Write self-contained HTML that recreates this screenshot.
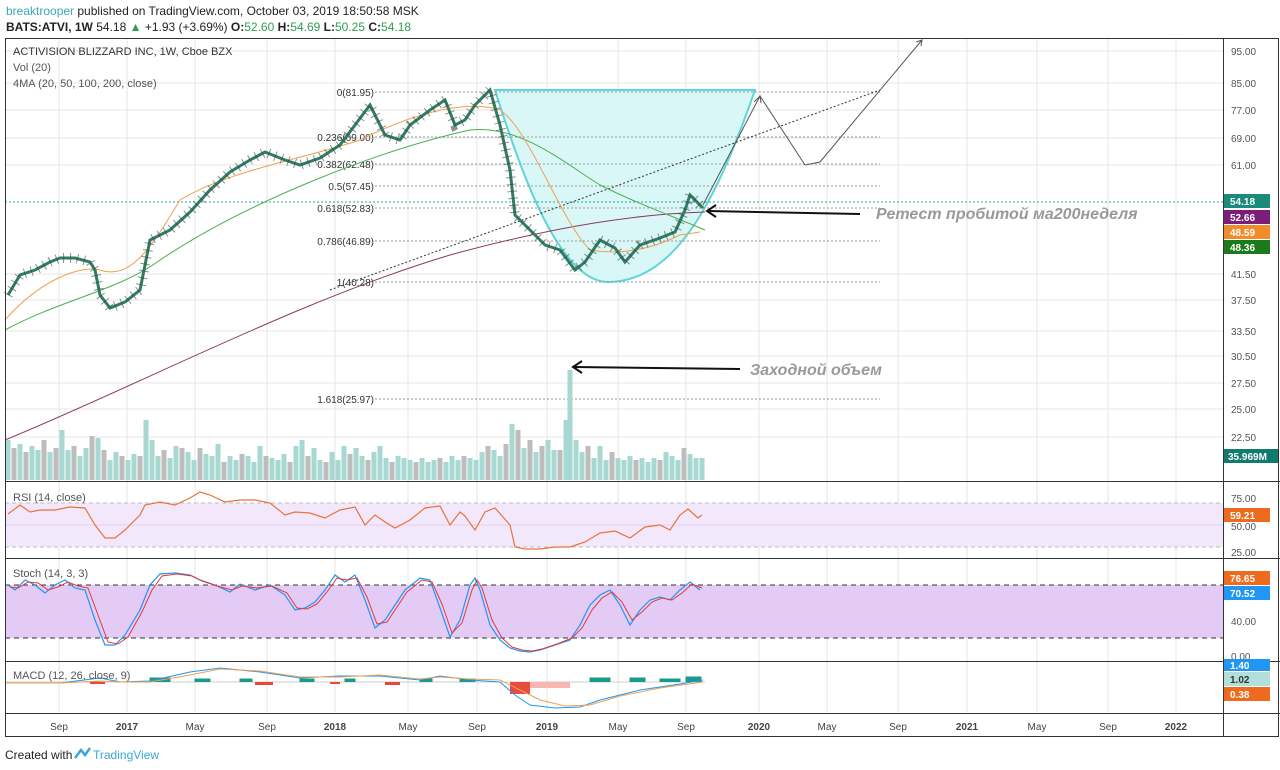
<!DOCTYPE html>
<html><head><meta charset="utf-8"><style>
html,body{margin:0;padding:0;background:#fff;width:1280px;height:770px;overflow:hidden;font-family:"Liberation Sans",sans-serif;}
svg text{font-family:"Liberation Sans",sans-serif;}
</style></head><body>
<svg width="1280" height="770" viewBox="0 0 1280 770" xmlns="http://www.w3.org/2000/svg">
<rect width="1280" height="770" fill="#fff"/>
<text x="6" y="15" font-size="12"><tspan fill="#3aa6b9">breaktrooper</tspan><tspan fill="#222"> published on TradingView.com, October 03, 2019 18:50:58 MSK</tspan></text>
<text x="6" y="31" font-size="12" fill="#222"><tspan font-weight="bold">BATS:ATVI, 1W</tspan> 54.18 <tspan fill="#2e9e4f">▲</tspan> +1.93 (+3.69%) <tspan font-weight="bold">O:</tspan><tspan fill="#2e9e4f">52.60</tspan> <tspan font-weight="bold">H:</tspan><tspan fill="#2e9e4f">54.69</tspan> <tspan font-weight="bold">L:</tspan><tspan fill="#2e9e4f">50.25</tspan> <tspan font-weight="bold">C:</tspan><tspan fill="#2e9e4f">54.18</tspan></text>
<g stroke="#e6e6e6" stroke-width="1">
<line x1="59" y1="38" x2="59" y2="712"/><line x1="127" y1="38" x2="127" y2="712"/><line x1="195" y1="38" x2="195" y2="712"/><line x1="267" y1="38" x2="267" y2="712"/><line x1="335" y1="38" x2="335" y2="712"/><line x1="408" y1="38" x2="408" y2="712"/><line x1="477" y1="38" x2="477" y2="712"/><line x1="547" y1="38" x2="547" y2="712"/><line x1="618" y1="38" x2="618" y2="712"/><line x1="686" y1="38" x2="686" y2="712"/><line x1="759" y1="38" x2="759" y2="712"/><line x1="827" y1="38" x2="827" y2="712"/><line x1="898" y1="38" x2="898" y2="712"/><line x1="967" y1="38" x2="967" y2="712"/><line x1="1037" y1="38" x2="1037" y2="712"/><line x1="1108" y1="38" x2="1108" y2="712"/><line x1="1176" y1="38" x2="1176" y2="712"/>
<line x1="5" y1="51" x2="1223" y2="51"/><line x1="5" y1="83" x2="1223" y2="83"/><line x1="5" y1="110" x2="1223" y2="110"/><line x1="5" y1="138" x2="1223" y2="138"/><line x1="5" y1="165" x2="1223" y2="165"/><line x1="5" y1="274" x2="1223" y2="274"/><line x1="5" y1="300" x2="1223" y2="300"/><line x1="5" y1="331" x2="1223" y2="331"/><line x1="5" y1="356" x2="1223" y2="356"/><line x1="5" y1="383" x2="1223" y2="383"/><line x1="5" y1="409" x2="1223" y2="409"/><line x1="5" y1="437" x2="1223" y2="437"/>
</g>
<path d="M495,90 C520,170 560,285 610,282 C680,280 720,190 755,90 Z" fill="#d9f7f7" stroke="#5fd6d6" stroke-width="2"/>
<g stroke="#999" stroke-width="1" stroke-dasharray="2,2">
<line x1="375" y1="92" x2="880" y2="92"/><line x1="375" y1="137" x2="880" y2="137"/><line x1="375" y1="164" x2="880" y2="164"/><line x1="375" y1="186" x2="880" y2="186"/><line x1="375" y1="208" x2="880" y2="208"/><line x1="375" y1="241" x2="880" y2="241"/><line x1="375" y1="282" x2="880" y2="282"/><line x1="375" y1="399" x2="880" y2="399"/>
</g>
<g font-size="10" fill="#333" text-anchor="end">
<text x="374" y="96">0(81.95)</text><text x="374" y="141">0.236(69.00)</text><text x="374" y="168">0.382(62.48)</text><text x="374" y="190">0.5(57.45)</text><text x="374" y="212">0.618(52.83)</text><text x="374" y="245">0.786(46.89)</text><text x="374" y="286">1(40.28)</text><text x="374" y="403">1.618(25.97)</text>
</g>
<line x1="5" y1="202" x2="1223" y2="202" stroke="#26a69a" stroke-dasharray="2,2"/>
<line x1="330" y1="290" x2="880" y2="90" stroke="#333" stroke-dasharray="2,2"/>
<path d="M8,480V440M14,480V448M20,480V444M26,480V452M32,480V446M38,480V450M44,480V440M50,480V452M56,480V448M62,480V430M68,480V450M74,480V446M80,480V456M86,480V448M92,480V436M98,480V438M104,480V450M110,480V460M116,480V452M122,480V456M128,480V460M134,480V454M140,480V456M146,480V420M152,480V440M158,480V456M164,480V450M170,480V458M176,480V446M182,480V448M188,480V452M194,480V460M200,480V448M206,480V454M212,480V456M218,480V444M224,480V462M230,480V456M236,480V460M242,480V454M248,480V456M254,480V462M260,480V446M266,480V456M272,480V458M278,480V460M284,480V454M290,480V462M296,480V446M302,480V440M308,480V456M314,480V448M320,480V460M326,480V462M332,480V452M338,480V460M344,480V446M350,480V454M356,480V448M362,480V456M368,480V460M374,480V452M380,480V446M386,480V458M392,480V462M398,480V456M404,480V458M410,480V460M416,480V462M422,480V458M428,480V462M434,480V460M440,480V458M446,480V462M452,480V456M458,480V460M464,480V456M470,480V458M476,480V460M482,480V452M488,480V446M494,480V450M500,480V456M506,480V444M512,480V424M518,480V430M524,480V448M530,480V440M536,480V452M542,480V446M548,480V440M554,480V450M560,480V450M566,480V420M570,480V370M576,480V440M582,480V452M588,480V446M594,480V458M600,480V446M606,480V460M612,480V452M618,480V458M624,480V460M630,480V456M636,480V460M642,480V458M648,480V462M654,480V458M660,480V460M666,480V452M672,480V456M678,480V460M684,480V448M690,480V454M696,480V458M702,480V458" stroke="#a8d8d2" stroke-width="5"/>
<path d="M14,480V448M26,480V452M44,480V440M56,480V448M74,480V446M92,480V436M104,480V450M122,480V456M140,480V456M164,480V450M182,480V448M200,480V448M224,480V462M242,480V454M266,480V456M290,480V462M308,480V456M326,480V462M350,480V454M368,480V460M392,480V462M416,480V462M440,480V458M464,480V456M488,480V446M506,480V444M518,480V430M530,480V440M542,480V446M560,480V450M588,480V446M612,480V452M636,480V460M660,480V460M684,480V448" stroke="#bdbdbd" stroke-width="5"/>
<path d="M5,440 C150,380 300,300 450,255 C560,225 640,214 705,212" fill="none" stroke="#8b3a62" stroke-width="1"/>
<path d="M5,330 C60,300 120,290 160,260 C250,200 380,150 470,130 C520,125 560,160 600,185 C640,205 670,215 705,230" fill="none" stroke="#4caf50" stroke-width="1"/>
<path d="M5,320 C40,280 80,265 100,270 C130,280 150,250 180,200 C230,170 300,160 360,140 C420,110 470,100 500,110 C530,130 560,220 590,250 C620,255 650,250 680,235 L700,232" fill="none" stroke="#f0a050" stroke-width="1"/>
<polyline points="8,295 20,275 35,270 50,262 60,258 75,258 90,262 95,270 100,295 110,308 125,302 140,290 150,240 170,230 190,212 210,190 230,172 250,160 265,152 285,160 300,165 320,158 340,145 355,125 370,105 385,135 400,140 410,125 430,110 445,100 455,125 465,120 475,105 490,90 500,125 510,170 515,215 530,230 545,245 560,250 575,270 585,262 600,240 615,248 625,262 640,245 660,238 675,232 685,210 690,195 700,205 703,208" fill="none" stroke="#2e7d63" stroke-width="3"/>
<polyline points="8,295 20,275 35,270 50,262 60,258 75,258 90,262 95,270 100,295 110,308 125,302 140,290 150,240 170,230 190,212 210,190 230,172 250,160 265,152 285,160 300,165 320,158 340,145 355,125 370,105 385,135 400,140 410,125 430,110 445,100 455,125 465,120 475,105 490,90 500,125 510,170 515,215 530,230 545,245 560,250 575,270 585,262 600,240 615,248 625,262 640,245 660,238 675,232 685,210 690,195 700,205 703,208" fill="none" stroke="#444" stroke-width="10" stroke-dasharray="1,6" opacity="0.6"/>
<polyline points="703,205 760,96 805,165 820,162 922,40" fill="none" stroke="#555" stroke-width="1"/>
<path d="M916,42 L922,40 L921,46" fill="none" stroke="#555"/>
<path d="M754,102 L760,96 L761,103" fill="none" stroke="#555"/>
<line x1="708" y1="211" x2="860" y2="214" stroke="#111" stroke-width="2"/><path d="M716,205 L707,211 L716,217" fill="none" stroke="#111" stroke-width="2"/>
<line x1="574" y1="367" x2="740" y2="369" stroke="#111" stroke-width="2"/><path d="M582,361 L573,367 L582,373" fill="none" stroke="#111" stroke-width="2"/>
<text x="876" y="219" font-size="16" font-weight="bold" font-style="italic" fill="#999">Ретест пробитой ма200неделя</text>
<text x="750" y="375" font-size="16" font-weight="bold" font-style="italic" fill="#999">Заходной объем</text>
<text x="13" y="55" font-size="11" fill="#333">ACTIVISION BLIZZARD INC, 1W, Cboe BZX</text>
<text x="13" y="71" font-size="11" fill="#555">Vol (20)</text>
<text x="13" y="87" font-size="11" fill="#555">4MA (20, 50, 100, 200, close)</text>
<rect x="5" y="503" width="1218" height="44" fill="#f3e8fb"/>
<line x1="5" y1="503" x2="1223" y2="503" stroke="#bbb" stroke-dasharray="4,3"/><line x1="5" y1="547" x2="1223" y2="547" stroke="#bbb" stroke-dasharray="4,3"/><line x1="5" y1="525" x2="1223" y2="525" stroke="#e0d0ee"/>
<polyline points="8,514 20,505 30,512 40,510 55,510 70,507 85,508 95,525 105,538 115,538 125,530 140,515 145,505 160,502 175,505 190,498 200,492 210,495 225,502 240,500 255,500 270,503 285,515 295,512 310,513 325,518 340,510 355,507 365,525 375,515 385,522 395,528 410,520 425,508 440,506 450,525 460,512 465,516 475,530 485,512 495,508 510,525 515,547 525,549 540,549 555,547 570,547 585,542 600,533 615,531 630,538 645,527 660,525 670,530 680,515 688,509 698,518 702,515" fill="none" stroke="#e8733a" stroke-width="1.2"/>
<text x="13" y="501" font-size="11" fill="#555">RSI (14, close)</text>
<rect x="5" y="585" width="1218" height="53" fill="#e4cbf6"/>
<line x1="5" y1="585" x2="1223" y2="585" stroke="#333" stroke-dasharray="5,4"/><line x1="5" y1="638" x2="1223" y2="638" stroke="#333" stroke-dasharray="5,4"/>
<polyline points="8,585 15,590 25,580 35,585 45,593 55,585 65,580 75,588 85,590 95,620 105,645 115,645 125,635 140,610 150,585 160,574 175,573 190,575 200,580 215,585 230,592 240,584 255,590 270,585 285,595 295,610 305,608 315,602 325,590 335,575 345,582 355,575 365,600 375,628 385,620 395,605 405,590 420,578 430,580 440,608 450,637 460,620 470,585 475,578 480,590 490,625 500,640 510,648 520,651 530,652 540,650 555,645 570,640 580,625 590,605 600,595 610,590 620,605 630,625 640,610 650,600 660,597 670,600 680,590 690,582 700,590" fill="none" stroke="#2196f3" stroke-width="1.2"/>
<polyline points="10,587 18,588 28,582 38,583 48,590 58,587 68,582 78,586 88,588 98,615 108,642 118,644 128,637 142,612 152,590 162,576 177,574 192,576 202,581 217,586 232,590 242,586 257,588 272,586 287,593 297,608 307,609 317,604 327,592 337,578 347,580 357,578 367,597 377,624 387,622 397,607 407,592 422,580 432,582 442,604 452,633 462,623 472,590 477,580 482,588 492,620 502,638 512,647 522,650 532,651 542,649 557,644 572,638 582,628 592,610 602,598 612,592 622,602 632,620 642,612 652,602 662,598 672,600 682,593 692,584 702,588" fill="none" stroke="#e53935" stroke-width="1"/>
<text x="13" y="577" font-size="11" fill="#555">Stoch (14, 3, 3)</text>
<line x1="5" y1="682" x2="705" y2="682" stroke="#ccc"/>
<path d="M90,682h8M150,682v-4h20v4M195,682v-3h15v3M240,682v-3h12v3M300,682v-3h14v3M345,682v-3h10v3M420,682v-3h12v3M460,682v-3h15v3M590,682v-4h20v4M630,682v-4h15v4M660,682v-3h20v3M686,682v-5h15v5" fill="#1a9a8a" stroke="#1a9a8a"/>
<path d="M90,682h15v2h-15z M255,682h18v3h-18z M330,682h10v2h-10z M385,682h15v3h-15z" fill="#e04b3a"/>
<path d="M510,682h20v12h-20z" fill="#e74c3c"/><path d="M530,682h40v6h-40z" fill="#f7b6b0"/>
<polyline points="5,683 60,683 100,678 120,682 150,681 190,672 220,668 260,672 300,678 340,676 380,676 420,680 440,676 470,680 500,682 515,695 530,705 555,708 580,707 600,700 640,690 680,684 703,680" fill="none" stroke="#2196f3" stroke-width="1"/>
<polyline points="5,683 60,683 100,681 120,682 150,682 190,675 220,669 260,671 300,677 340,677 380,675 420,679 440,677 470,679 500,680 520,690 540,700 565,706 590,705 620,696 660,688 703,682" fill="none" stroke="#f0a050" stroke-width="1"/>
<text x="13" y="679" font-size="11" fill="#555">MACD (12, 26, close, 9)</text>
<g stroke="#333" stroke-width="1" fill="none">
<rect x="5.5" y="38.5" width="1273" height="698"/>
<line x1="1223.5" y1="38" x2="1223.5" y2="737"/>
<line x1="5" y1="481.5" x2="1280" y2="481.5"/>
<line x1="5" y1="558.5" x2="1280" y2="558.5"/>
<line x1="5" y1="661.5" x2="1280" y2="661.5"/>
<line x1="5" y1="713.5" x2="1280" y2="713.5"/>
</g>
<g font-size="10" fill="#555">
<text x="1231" y="55">95.00</text><text x="1231" y="87">85.00</text><text x="1231" y="114">77.00</text><text x="1231" y="142">69.00</text><text x="1231" y="169">61.00</text><text x="1231" y="278">41.50</text><text x="1231" y="304">37.50</text><text x="1231" y="335">33.50</text><text x="1231" y="360">30.50</text><text x="1231" y="387">27.50</text><text x="1231" y="413">25.00</text><text x="1231" y="441">22.50</text>
<text x="1231" y="502">75.00</text><text x="1231" y="530">50.00</text><text x="1231" y="556">25.00</text><text x="1231" y="625">40.00</text><text x="1231" y="660">0.00</text>
</g>
<g font-size="10" font-weight="bold" fill="#fff">
<rect x="1224" y="194" width="46" height="14" fill="#1a8a7a"/><text x="1230" y="205">54.18</text>
<rect x="1224" y="210" width="46" height="14" fill="#7b1e7a"/><text x="1230" y="221">52.66</text>
<rect x="1224" y="225" width="46" height="14" fill="#f08c2a"/><text x="1230" y="236">48.59</text>
<rect x="1224" y="240" width="46" height="14" fill="#1b7a1b"/><text x="1230" y="251">48.36</text>
<rect x="1224" y="449" width="54" height="14" fill="#137a70"/><text x="1228" y="460">35.969M</text>
<rect x="1224" y="508" width="46" height="14" fill="#ee6a1f"/><text x="1230" y="519">59.21</text>
<rect x="1224" y="571" width="46" height="14" fill="#ee6a1f"/><text x="1230" y="582">76.65</text>
<rect x="1224" y="586" width="46" height="14" fill="#2196f3"/><text x="1230" y="597">70.52</text>
<rect x="1224" y="659" width="46" height="12" fill="#2196f3"/><text x="1230" y="669">1.40</text>
<rect x="1224" y="672" width="46" height="14" fill="#b2dfdb"/><text x="1230" y="683" fill="#333">1.02</text>
<rect x="1224" y="687" width="46" height="14" fill="#ee6a1f"/><text x="1230" y="698">0.38</text>
</g>
<g font-size="10" fill="#444" text-anchor="middle">
<text x="59" y="730">Sep</text><text x="127" y="730" font-weight="bold">2017</text><text x="195" y="730">May</text><text x="267" y="730">Sep</text><text x="335" y="730" font-weight="bold">2018</text><text x="408" y="730">May</text><text x="477" y="730">Sep</text><text x="547" y="730" font-weight="bold">2019</text><text x="618" y="730">May</text><text x="686" y="730">Sep</text><text x="759" y="730" font-weight="bold">2020</text><text x="827" y="730">May</text><text x="898" y="730">Sep</text><text x="967" y="730" font-weight="bold">2021</text><text x="1037" y="730">May</text><text x="1108" y="730">Sep</text><text x="1176" y="730" font-weight="bold">2022</text>
</g>
<text x="5" y="759" font-size="12" fill="#222">Created with</text>
<path d="M75,758 L81,750 L85,755 L90,748" fill="none" stroke="#3aa6d9" stroke-width="2.5"/>
<text x="93" y="759" font-size="12" fill="#3aa6d9">TradingView</text>
</svg>
</body></html>
